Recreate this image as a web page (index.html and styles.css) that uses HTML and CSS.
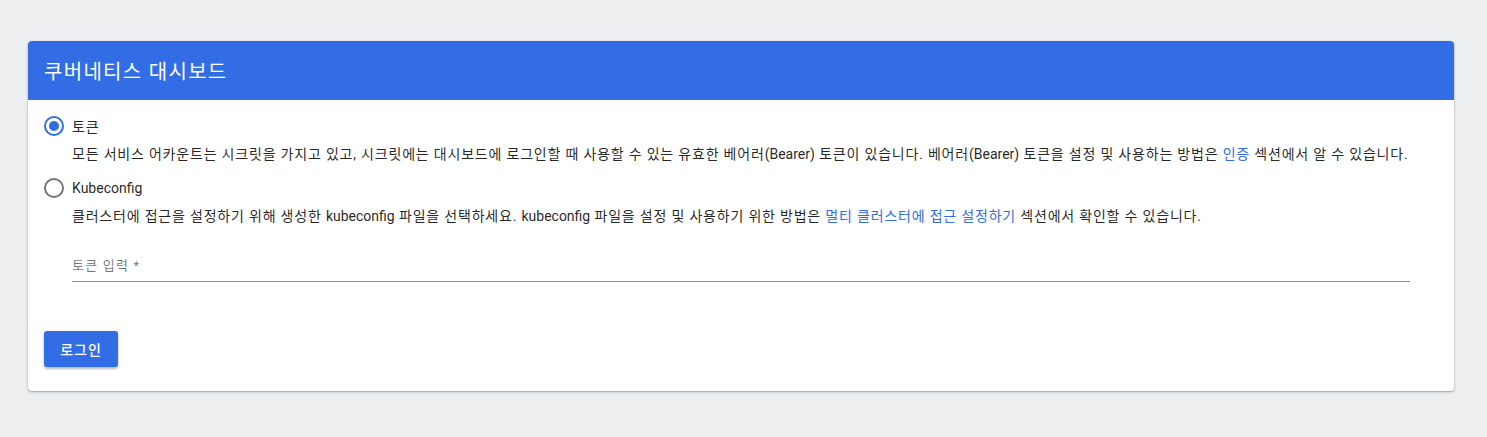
FILE: index.html
```html
<!DOCTYPE html>
<html lang="ko">
<head>
<meta charset="utf-8">
<link rel="stylesheet" href="styles.css">
</head>
<body>
<div class="page">
  <div class="card">
    <div class="card-header">쿠버네티스 대시보드</div>
    <div class="card-body">
      <div class="option">
        <label class="radio-row">
          <span class="radio checked"><span class="dot"></span></span>
          <span class="radio-label">토큰</span>
        </label>
        <p class="desc">모든 서비스 어카운트는 시크릿을 가지고 있고, 시크릿에는 대시보드에 로그인할 때 사용할 수 있는 유효한 베어러<span class="en">(Bearer)</span> 토큰이 있습니다. 베어러<span class="en">(Bearer)</span> 토큰을 설정 및 사용하는 방법은 <a class="link">인증</a> 섹션에서 알 수 있습니다.</p>
      </div>
      <div class="option">
        <label class="radio-row">
          <span class="radio"></span>
          <span class="radio-label en">Kubeconfig</span>
        </label>
        <p class="desc">클러스터에 접근을 설정하기 위해 생성한 <span class="en">kubeconfig</span> 파일을 선택하세요. <span class="en">kubeconfig</span> 파일을 설정 및 사용하기 위한 방법은 <a class="link">멀티 클러스터에 접근 설정하기</a> 섹션에서 확인할 수 있습니다.</p>
      </div>
      <div class="field">
        <span class="field-label">토큰 입력 *</span>
      </div>
      <div class="actions">
        <button class="btn">로그인</button>
      </div>
    </div>
  </div>
</div>
</body>
</html>
```

FILE: styles.css
```css
html, body {
  margin: 0;
  padding: 0;
  background: #edeef0;
  font-family: Roboto, "Noto Sans CJK KR", sans-serif;
}
.page {
  padding: 41px 33px 46px 28px;
}
.card {
  background: #fff;
  border-radius: 4px;
  box-shadow: 0 1px 3px rgba(0,0,0,0.25), 0 1px 1px rgba(0,0,0,0.12);
  overflow: hidden;
}
.card-header {
  background: #326de6;
  color: #fff;
  height: 59px;
  display: flex;
  align-items: center;
  padding: 0 16px;
  font-size: 20px;
  font-weight: 400;
  letter-spacing: 1.3px;
}
.card-body {
  padding: 16px 16px 24px 16px;
}
.option {
  display: flex;
  flex-direction: column;
}
.radio-row {
  display: flex;
  align-items: center;
  height: 20px;
  margin-bottom: 8px;
}
.option + .option {
  margin-top: 14px;
}
.radio {
  box-sizing: border-box;
  width: 20px;
  height: 20px;
  border: 2px solid #757575;
  border-radius: 50%;
  display: flex;
  align-items: center;
  justify-content: center;
  margin-right: 8px;
}
.radio.checked {
  border-color: #326de6;
}
.dot {
  width: 10px;
  height: 10px;
  border-radius: 50%;
  background: #326de6;
}
.radio-label {
  font-size: 14px;
  color: rgba(0,0,0,0.87);
  letter-spacing: 0.8px;
}
.desc {
  margin: 0 0 0 28px;
  font-size: 14px;
  line-height: 20px;
  color: rgba(0,0,0,0.87);
  letter-spacing: 0.8px;
}
.en {
  letter-spacing: 0;
}
.link {
  color: #326de6;
  text-decoration: none;
}
.field {
  margin: 29px 28px 0 28px;
  height: 26px;
  border-bottom: 1px solid #949494;
  display: flex;
  align-items: flex-start;
}
.field-label {
  font-size: 13px;
  color: rgba(0,0,0,0.54);
  letter-spacing: 1.2px;
}
.actions {
  margin-top: 49px;
}
.btn {
  background: #326de6;
  color: #fff;
  border: none;
  border-radius: 3px;
  height: 36px;
  width: 74px;
  font-family: Roboto, "Noto Sans CJK KR", sans-serif;
  font-size: 14px;
  font-weight: 500;
  letter-spacing: 1px;
  box-shadow: 0 2px 2px rgba(0,0,0,0.2), 0 1px 4px rgba(0,0,0,0.12);
}
```
